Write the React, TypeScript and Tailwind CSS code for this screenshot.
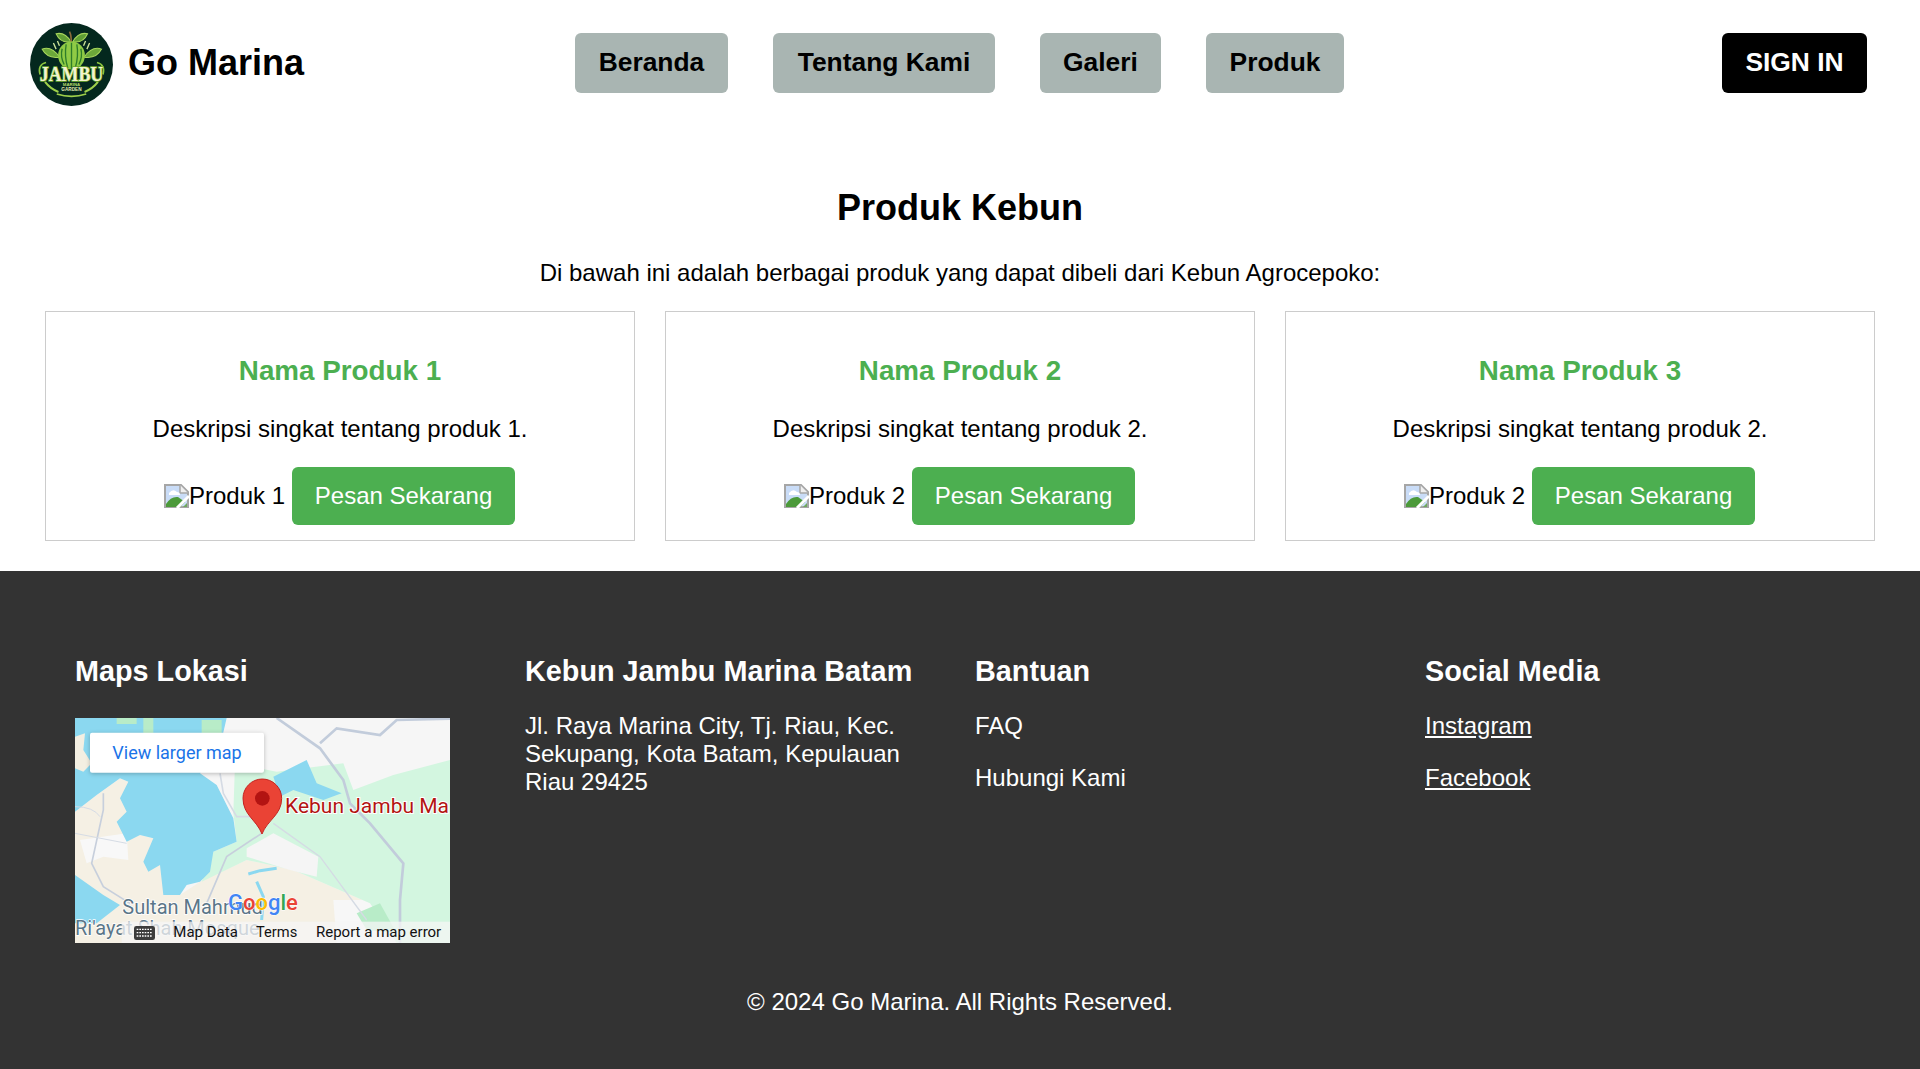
const navItems = [
  { label: 'Beranda', size: 'w-[153px]' },
  { label: 'Tentang Kami', size: 'w-[222px]' },
  { label: 'Galeri', size: 'w-[121px]' },
  { label: 'Produk', size: 'w-[138px]' },
];

const products = [
  { name: 'Nama Produk 1', desc: 'Deskripsi singkat tentang produk 1.', alt: 'Produk 1' },
  { name: 'Nama Produk 2', desc: 'Deskripsi singkat tentang produk 2.', alt: 'Produk 2' },
  { name: 'Nama Produk 3', desc: 'Deskripsi singkat tentang produk 2.', alt: 'Produk 2' },
];

function Logo() {
  return (
    <svg viewBox="90 68 248 248" className="w-[83px] h-[83px] shrink-0 mt-[3px]">
      <circle cx="214" cy="192" r="124" fill="#04281e" />
      {/* rays */}
      <path d="M160 128 L168 146 M172 122 L178 136 M268 128 L260 146 M256 122 L250 136" stroke="#cfe59a" strokeWidth="4" fill="none" />
      {/* leaves */}
      <path d="M168 100 Q195 94 212 124 Q182 130 168 100Z" fill="#5f9e35" stroke="#a8d65c" strokeWidth="3" />
      <path d="M262 100 Q235 94 218 124 Q248 130 262 100Z" fill="#5f9e35" stroke="#a8d65c" strokeWidth="3" />
      <path d="M126 146 Q155 136 178 170 Q142 176 126 146Z" fill="#6ca83a" stroke="#a8d65c" strokeWidth="3" />
      <path d="M304 146 Q275 136 252 170 Q288 176 304 146Z" fill="#6ca83a" stroke="#a8d65c" strokeWidth="3" />
      <path d="M213 126 Q214 106 208 94" stroke="#8a6a3a" strokeWidth="5" fill="none" />
      {/* fruit */}
      <ellipse cx="214" cy="165" rx="40" ry="42" fill="#8fcb45" />
      <path d="M186 145 Q180 168 192 192M198 132 Q192 168 203 203M214 127V206M230 132 Q236 168 225 203M242 145 Q248 168 236 192" stroke="#2e7d2a" strokeWidth="4" fill="none" />
      {/* badge */}
      <path d="M120 222 Q112 192 138 186 M308 222 Q316 192 290 186" stroke="#8cc63f" strokeWidth="5" fill="none" />
      <path d="M135 244 Q150 264 175 274 M293 244 Q278 264 253 274" stroke="#9ed04a" strokeWidth="6" fill="none" />
      <path d="M170 280 Q214 294 258 280" stroke="#9ed04a" strokeWidth="5" fill="none" />
      <text x="214" y="240" textAnchor="middle" textLength="190" lengthAdjust="spacingAndGlyphs" fontFamily="'Liberation Serif', serif" fontWeight="700" fontSize="60" fill="#f3f3cf" stroke="#6fa82e" strokeWidth="5" paintOrder="stroke">JAMBU</text>
      <text x="214" y="257" textAnchor="middle" fontFamily="'Liberation Sans', sans-serif" fontWeight="700" fontSize="13" fill="#b7dc6a">MARINA</text>
      <text x="214" y="272" textAnchor="middle" fontFamily="'Liberation Sans', sans-serif" fontWeight="700" fontSize="14" fill="#e3edb0">GARDEN</text>
    </svg>
  );
}

function BrokenImage({ alt }: { alt: string }) {
  return (
    <span className="inline-flex items-center">
      <svg viewBox="0 0 25 24" className="w-[25px] h-[24px] shrink-0">
        <path d="M1 1H17L24 8V23H1Z" fill="#c9dcf7" stroke="#a6a6a6" strokeWidth="2" />
        <path d="M16 1V9H24" fill="#efefef" stroke="#a6a6a6" strokeWidth="1.5" />
        <path d="M5 9 Q9 4 13 8 Q16 8 16 11 H5Z" fill="#ffffff" />
        <path d="M2 23 V20 Q7 12 14 13 L21 18 L16 23Z" fill="#4c9a3a" />
        <path d="M25 12 L13 24" stroke="#ffffff" strokeWidth="3" />
        <path d="M19 23 L23 19 V23Z" fill="#6ea85e" />
      </svg>
      <span>{alt}</span>
    </span>
  );
}

function MapEmbed() {
  return (
    <svg viewBox="45 54 1125 675" className="block w-[375px] h-[225px]" fontFamily="Roboto, sans-serif">
      <rect x="45" y="54" width="1125" height="675" fill="#f6f6f6" />
      {/* sand */}
      <path d="M45 335 L110 285 L180 235 L205 245 L240 405 L280 415 L300 495 L360 585 L420 545 L560 480 L700 510 L930 610 L1000 729 L45 729Z" fill="#f5f0e4" />
      <path d="M60 420 L200 400 L205 480 L130 470 L80 490Z" fill="#f8f8f8" />
      <path d="M820 600 L930 600 L1010 729 L830 729Z" fill="#f7f7f7" />
      {/* green */}
      <path d="M525 190 L650 215 L850 190 L880 270 L1000 225 L1170 180 L1170 729 L1010 729 L930 610 L700 510 L560 480 L425 545 L460 455 L530 425 L520 340Z" fill="#d3f6e0" />
      <path d="M890 640 L960 610 L1010 700 L920 690Z" fill="#b8ecc8" />
      <path d="M560 445 L640 400 L775 470 L770 530 L690 510 L560 470Z" fill="#f5f5f5" />
      {/* water */}
      <path d="M45 54 L500 54 L480 140 L420 220 L470 255 L500 315 L520 355 L530 425 L460 455 L450 515 L420 545 L380 555 L360 585 L310 585 L300 495 L265 515 L250 485 L280 415 L240 405 L200 425 L170 365 L200 335 L180 295 L205 245 L180 235 L110 285 L45 335Z" fill="#8bd8f0" />
      <path d="M45 110 L75 100 L70 150 L95 190 L70 215 L45 205Z" fill="#f3efe2" />
      <path d="M45 525 L130 585 L180 615 L110 670 L45 670Z" fill="#8bd8f0" />
      <path d="M640 230 L740 180 L770 250 L845 280 L790 300 L700 270 L660 290Z" fill="#8bd8f0" />
      <path d="M565 522 L600 512 L650 505 M590 545 L610 590 L605 660" stroke="#8bd8f0" strokeWidth="9" fill="none" />
      <path d="M170 54 h60 v18 h-60Z M425 60 h60 v40 h-60Z M250 54 h30 v50 h-30Z" fill="#b8ecc8" />
      {/* roads */}
      <path d="M650 54 L780 145 L850 240 L870 310 L930 370 L1030 490 L1020 600 L1020 729" stroke="#c2ccdb" strokeWidth="8" fill="none" />
      <path d="M780 130 L830 85 L960 105 L1010 60 L1170 56" stroke="#c2ccdb" strokeWidth="8" fill="none" />
      <path d="M605 400 L500 470 L440 610" stroke="#c7cfdc" strokeWidth="5" fill="none" />
      <path d="M640 370 L780 470 L920 660" stroke="#d5dbe4" strokeWidth="4" fill="none" />
      <path d="M130 280 V330 L95 490 L130 560 L210 610" stroke="#c7cfdc" strokeWidth="5" fill="none" />
      <path d="M45 320 Q100 320 120 350 M45 400 L200 430" stroke="#d5dbe4" strokeWidth="3" fill="none" />
      <path d="M480 220 L490 280 L530 350 L620 350" stroke="#d5dbe4" strokeWidth="5" fill="none" />
      {/* labels */}
      <text x="187" y="642" fontSize="60" fill="#5b7688" stroke="#fff" strokeWidth="5" paintOrder="stroke">Sultan Mahmud</text>
      <text x="45" y="706" fontSize="60" fill="#5b7688" stroke="#fff" strokeWidth="4" paintOrder="stroke">Ri'ayat Shah Mosque</text>
      <rect x="185" y="665" width="985" height="64" fill="#f5f5f5" fillOpacity="0.75" />
      {/* google */}
      <text x="504" y="630" fontSize="66" fontWeight="500" stroke="#fff" strokeWidth="3" paintOrder="stroke">
        <tspan fill="#4285f4">G</tspan>
        <tspan fill="#ea4335">o</tspan>
        <tspan fill="#fbbc05">o</tspan>
        <tspan fill="#4285f4">g</tspan>
        <tspan fill="#34a853">l</tspan>
        <tspan fill="#ea4335">e</tspan>
      </text>
      {/* pin */}
      <path d="M606 402 C590 360 549 345 549 295 A58 58 0 0 1 665 295 C665 345 622 360 606 402Z" fill="#ea4335" stroke="#c5221f" strokeWidth="3" />
      <circle cx="607" cy="295" r="22" fill="#b31412" />
      <text x="675" y="340" fontSize="63" fill="#b31412" stroke="#fff" strokeWidth="6" paintOrder="stroke">Kebun Jambu Ma</text>
      {/* view larger */}
      <rect x="90" y="98" width="522" height="120" rx="6" fill="#fff" style={{ filter: 'drop-shadow(0 3px 6px rgba(0,0,0,0.25))' }} />
      <text x="351" y="176" textAnchor="middle" fontSize="54" fill="#1a73e8">View larger map</text>
      {/* attribution */}
      <rect x="222" y="678" width="63" height="42" rx="7" fill="#3c3c3c" />
      <path d="M230 688h47M230 698h47M230 708h47" stroke="#fff" strokeWidth="4" strokeDasharray="5 3" />
      <text x="340" y="712" fontSize="45" fill="#111">Map Data</text>
      <text x="588" y="712" fontSize="44" fill="#111">Terms</text>
      <text x="768" y="712" fontSize="45" fill="#111">Report a map error</text>
    </svg>
  );
}

export default function App() {
  return (
    <div className="min-h-[1069px] bg-white text-black text-[24px] font-['Liberation_Sans',Arial,sans-serif] flex flex-col">
      <header className="flex items-center h-[125px] px-[30px]">
        <div className="flex items-center gap-[15px] w-[545px]">
          <Logo />
          <span className="text-[36px] font-bold mt-[1px]">Go Marina</span>
        </div>
        <nav className="flex gap-[45px]">
          {navItems.map((item) => (
            <a key={item.label} className={`flex items-center justify-center h-[60px] rounded-[6px] bg-[#a9b5b2] text-[26.4px] font-bold ${item.size}`}>
              {item.label}
            </a>
          ))}
        </nav>
        <a className="ml-auto mr-[23px] flex items-center justify-center w-[145px] h-[60px] rounded-[6px] bg-black text-white text-[26.4px] font-bold">
          SIGN IN
        </a>
      </header>

      <main className="px-[45px] pt-[58px] pb-[30px] text-center">
        <h1 className="text-[36px] font-bold leading-[50px]">Produk Kebun</h1>
        <p className="mt-[26px] leading-[28px]">Di bawah ini adalah berbagai produk yang dapat dibeli dari Kebun Agrocepoko:</p>
        <div className="mt-[24px] grid grid-cols-3 gap-[30px]">
          {products.map((p) => (
            <div key={p.name} className="border border-[#cccccc] h-[230px] pt-[41px]">
              <h3 className="text-[27.8px] font-bold leading-[36px] text-[#4caf50]">{p.name}</h3>
              <p className="mt-[26px] leading-[28px]">{p.desc}</p>
              <div className="mt-[24px] flex items-center justify-center gap-[7px] pr-[1px]">
                <BrokenImage alt={p.alt} />
                <a className="flex items-center justify-center w-[223px] h-[58px] rounded-[6px] bg-[#4caf50] text-white">Pesan Sekarang</a>
              </div>
            </div>
          ))}
        </div>
      </main>

      <footer className="flex-1 bg-[#333333] text-white pl-[75px] pr-[45px] pt-[80px]">
        <div className="grid grid-cols-4">
          <div className="pr-[30px]">
            <h3 className="text-[28.8px] font-bold leading-[40px]">Maps Lokasi</h3>
            <div className="mt-[27px]">
              <MapEmbed />
            </div>
          </div>
          <div className="pr-[45px]">
            <h3 className="text-[28.8px] font-bold leading-[40px] whitespace-nowrap">Kebun Jambu Marina Batam</h3>
            <p className="mt-[21px] leading-[28px]">Jl. Raya Marina City, Tj. Riau, Kec. Sekupang, Kota Batam, Kepulauan Riau 29425</p>
          </div>
          <div className="pr-[30px]">
            <h3 className="text-[28.8px] font-bold leading-[40px]">Bantuan</h3>
            <ul className="mt-[21px] flex flex-col gap-[24px] leading-[28px]">
              <li>FAQ</li>
              <li>Hubungi Kami</li>
            </ul>
          </div>
          <div>
            <h3 className="text-[28.8px] font-bold leading-[40px]">Social Media</h3>
            <ul className="mt-[21px] flex flex-col gap-[24px] leading-[28px]">
              <li className="underline">Instagram</li>
              <li className="underline">Facebook</li>
            </ul>
          </div>
        </div>
        <p className="mt-[45px] -ml-[30px] text-center leading-[28px]">© 2024 Go Marina. All Rights Reserved.</p>
      </footer>
    </div>
  );
}
